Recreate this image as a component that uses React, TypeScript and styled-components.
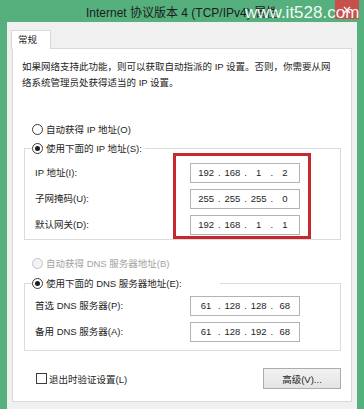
import React from "react"
import styled, { createGlobalStyle } from "styled-components"

const GlobalStyle = createGlobalStyle`
  html, body {
    margin: 0;
    padding: 0;
  }
  body {
    width: 364px;
    height: 409px;
    overflow: hidden;
    font-family: "Liberation Sans", "Noto Sans CJK SC", sans-serif;
    color: #1e1e1e;
  }
  * {
    box-sizing: border-box;
  }
`

const Window = styled.div`
  position: relative;
  display: flex;
  flex-direction: column;
  height: 409px;
  background: #55b07e;
`

const TitleBar = styled.header`
  display: grid;
  grid-template-columns: 1fr auto 1fr;
  height: 22px;
  flex-shrink: 0;
`

const Title = styled.div`
  grid-column: 2;
  padding-top: 3px;
  font-size: 12px;
  line-height: 20px;
  color: #1b1b1b;
  white-space: nowrap;
`

const CloseButton = styled.div`
  grid-column: 3;
  justify-self: end;
  width: 24px;
  height: 19px;
  margin-right: 5px;
  background: #c7504d;
  display: flex;
  align-items: center;
  justify-content: center;
`

const Watermark = styled.div`
  position: absolute;
  top: 4px;
  left: 245px;
  font-size: 17px;
  line-height: 17px;
  color: rgba(255, 255, 255, 0.95);
  white-space: nowrap;
`

const Dialog = styled.div`
  flex: 1;
  margin: 0 7px;
  background: #f0f0f0;
  display: flex;
  flex-direction: column;
`

const TabStrip = styled.div`
  display: flex;
  padding: 8px 0 0 4px;
`

const Tab = styled.div`
  position: relative;
  z-index: 1;
  width: 40px;
  height: 19px;
  margin-bottom: -1px;
  padding-left: 6px;
  border: 1px solid #d9d9d9;
  border-bottom: none;
  background: #fff;
  font-size: 9.5px;
  line-height: 17px;
`

const Panel = styled.section`
  margin: 0 5px;
  padding: 10px 9px 12px 9px;
  background: #fff;
  border: 1px solid #d9d9d9;
  display: flex;
  flex-direction: column;
`

const Intro = styled.p`
  margin: 0;
  font-size: 9.5px;
  line-height: 16px;
`

const RadioRow = styled.label<{ $mt?: number; $disabled?: boolean }>`
  display: flex;
  align-items: center;
  gap: 3px;
  height: 16px;
  margin: ${p => p.$mt ?? 0}px 0 0 10px;
  font-size: 9.5px;
  color: ${p => (p.$disabled ? "#a3a3a3" : "#1e1e1e")};
`

const Radio = styled.span<{ $checked?: boolean; $disabled?: boolean }>`
  position: relative;
  width: 11px;
  height: 11px;
  border-radius: 50%;
  border: 1px solid ${p => (p.$disabled ? "#c4c4c4" : "#3c3c3c")};
  background: ${p => (p.$disabled ? "#f2f2f2" : "#fff")};
  flex-shrink: 0;

  &::after {
    content: "";
    display: ${p => (p.$checked ? "block" : "none")};
    position: absolute;
    left: 2px;
    top: 2px;
    width: 5px;
    height: 5px;
    border-radius: 50%;
    background: #1e1e1e;
  }
`

const Group = styled.fieldset<{ $mt: number; $pb: number }>`
  margin: ${p => p.$mt}px 1px 0 2px;
  padding: 0 0 ${p => p.$pb}px 0;
  border: 1px solid #dcdcdc;
  min-width: 0;
`

const GroupLegend = styled.legend<{ $w: number }>`
  width: ${p => p.$w}px;
  height: 16px;
  margin-left: 7px;
  padding: 0;

  & > ${RadioRow} {
    margin: 0;
  }
`

const GroupBody = styled.div<{ $mt: number }>`
  display: flex;
  margin-top: ${p => p.$mt}px;
  padding-left: 10px;
`

const LabelColumn = styled.div<{ $width: number; $offset: number }>`
  width: ${p => p.$width}px;
  padding-top: ${p => p.$offset}px;
  display: flex;
  flex-direction: column;
  gap: 6px;
`

const FieldLabel = styled.div`
  height: 20px;
  font-size: 9.5px;
  line-height: 20px;
  white-space: nowrap;
`

const InputColumn = styled.div`
  display: flex;
  flex-direction: column;
  gap: 6px;
`

const Highlight = styled(InputColumn)`
  border: 3px solid #c9272e;
  padding: 7px 8px 1px 14px;
`

const IpBox = styled.div`
  width: 110px;
  height: 20px;
  padding: 0 3px 0 4px;
  border: 1px solid #b3b3b3;
  background: #fff;
  display: grid;
  grid-template-columns: 1fr 4px 1fr 4px 1fr 4px 1fr;
  align-items: center;
  font-size: 9.5px;
  line-height: 18px;
  text-align: center;
`

const BottomRow = styled.div`
  display: flex;
  align-items: center;
  justify-content: space-between;
  margin-top: 17px;
  padding: 0 1px 0 14px;
`

const CheckLabel = styled.label`
  display: flex;
  align-items: center;
  gap: 2px;
  font-size: 9.5px;
`

const CheckBox = styled.span`
  width: 11px;
  height: 11px;
  border: 1px solid #3c3c3c;
  background: #fff;
`

const Button = styled.button`
  width: 78px;
  height: 21px;
  padding: 0;
  border: 1px solid #acacac;
  background: linear-gradient(#f2f2f2, #e4e4e4);
  font-family: inherit;
  font-size: 9.5px;
  color: #1e1e1e;
`

const IpField = ({ value }: { value: string }) => {
  const parts = value.split(".")
  return (
    <IpBox>
      {parts.map((part, i) => (
        <React.Fragment key={i}>
          {i > 0 && <span>.</span>}
          <span>{part}</span>
        </React.Fragment>
      ))}
    </IpBox>
  )
}

const App = () => {
  return (
    <>
      <GlobalStyle />
      <Window>
        <TitleBar>
          <Title>Internet 协议版本 4 (TCP/IPv4) 属性</Title>
          <CloseButton>
            <svg width="8" height="8" viewBox="0 0 8 8">
              <path d="M1 1L7 7M7 1L1 7" stroke="#fff" strokeWidth="1.3" />
            </svg>
          </CloseButton>
        </TitleBar>
        <Watermark>www.it528.com</Watermark>
        <Dialog>
          <TabStrip>
            <Tab>常规</Tab>
          </TabStrip>
          <Panel>
            <Intro>
              如果网络支持此功能，则可以获取自动指派的 IP 设置。否则，你需要从网
              <br />
              络系统管理员处获得适当的 IP 设置。
            </Intro>

            <RadioRow $mt={30}>
              <Radio />
              自动获得 IP 地址(O)
            </RadioRow>
            <Group $mt={3} $pb={0}>
              <GroupLegend $w={113}>
                <RadioRow>
                  <Radio $checked />
                  使用下面的 IP 地址(S):
                </RadioRow>
              </GroupLegend>
              <GroupBody $mt={-3}>
                <LabelColumn $width={138} $offset={10}>
                  <FieldLabel>IP 地址(I):</FieldLabel>
                  <FieldLabel>子网掩码(U):</FieldLabel>
                  <FieldLabel>默认网关(D):</FieldLabel>
                </LabelColumn>
                <Highlight>
                  <IpField value="192.168.1.2" />
                  <IpField value="255.255.255.0" />
                  <IpField value="192.168.1.1" />
                </Highlight>
              </GroupBody>
            </Group>

            <RadioRow $mt={15} $disabled>
              <Radio $disabled />
              自动获得 DNS 服务器地址(B)
            </RadioRow>
            <Group $mt={4} $pb={8}>
              <GroupLegend $w={188}>
                <RadioRow>
                  <Radio $checked />
                  使用下面的 DNS 服务器地址(E):
                </RadioRow>
              </GroupLegend>
              <GroupBody $mt={5}>
                <LabelColumn $width={155} $offset={0}>
                  <FieldLabel>首选 DNS 服务器(P):</FieldLabel>
                  <FieldLabel>备用 DNS 服务器(A):</FieldLabel>
                </LabelColumn>
                <InputColumn>
                  <IpField value="61.128.128.68" />
                  <IpField value="61.128.192.68" />
                </InputColumn>
              </GroupBody>
            </Group>

            <BottomRow>
              <CheckLabel>
                <CheckBox />
                退出时验证设置(L)
              </CheckLabel>
              <Button>高级(V)...</Button>
            </BottomRow>
          </Panel>
        </Dialog>
      </Window>
    </>
  )
}

export default App
